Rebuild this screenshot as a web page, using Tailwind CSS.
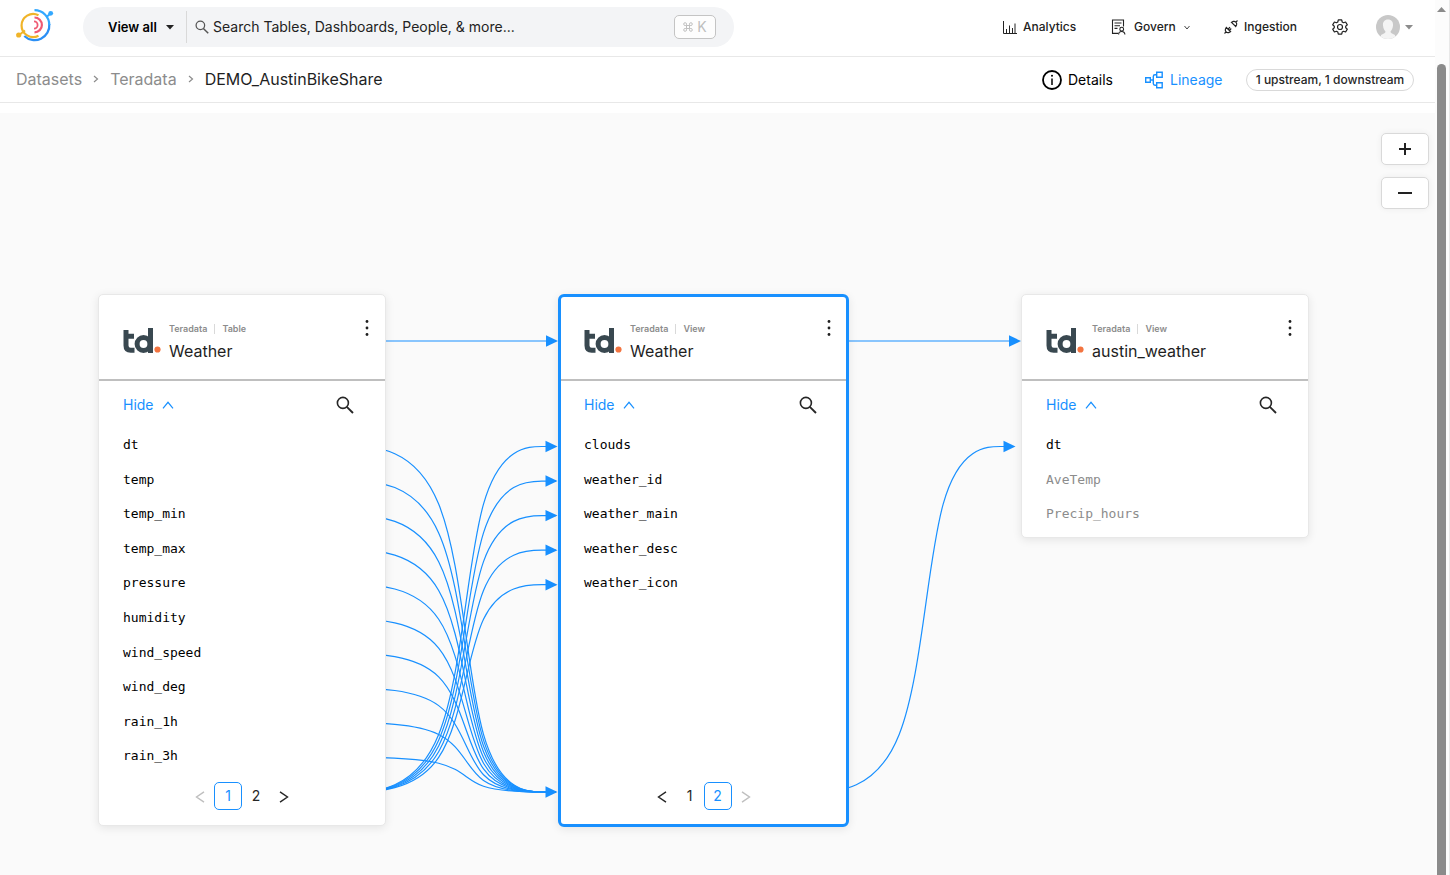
<!DOCTYPE html>
<html lang="en">
<head>
<meta charset="utf-8">
<meta name="viewport" content="width=device-width, initial-scale=1">
<title>DEMO_AustinBikeShare lineage</title>
<script src="https://cdn.jsdelivr.net/npm/@tailwindcss/browser@4"></script>
</head>
<body class="flex min-h-screen bg-white font-['Inter','Open_Sans',sans-serif] text-sm text-[#262626]">

<!-- Shared icons -->
<svg class="hidden" aria-hidden="true">
  <symbol id="td" viewBox="0 0 38 26">
    <g fill="none" stroke="#394850" stroke-width="5">
      <path d="M3 2V17.500Q3 22.200 7.700 22.200H11.500M3 8.200H11"/>
      <circle cx="20.500" cy="16" r="6.400"/>
      <path d="M27.500 0V25"/>
    </g>
    <circle cx="34.500" cy="21.500" r="3.100" fill="#f37440"/>
  </symbol>
  <symbol id="dots" viewBox="0 0 4 18"><g fill="#1f1f1f"><circle cx="2" cy="2.500" r="1.400"/><circle cx="2" cy="9" r="1.400"/><circle cx="2" cy="15.500" r="1.400"/></g></symbol>
  <symbol id="find" viewBox="0 0 18 18"><g fill="none" stroke="currentColor" stroke-width="1.600"><circle cx="6.900" cy="6.900" r="5.500"/><path d="M10.800 10.800L17 17" stroke-width="1.900"/></g></symbol>
  <symbol id="up" viewBox="0 0 12 8"><path d="M1 7.300L6 1.300L11 7.300" fill="none" stroke="currentColor" stroke-width="1.200"/></symbol>
  <symbol id="prev" viewBox="0 0 10 12"><path d="M9 .8L1.500 6L9 11.200" fill="none" stroke="currentColor" stroke-width="1.400"/></symbol>
  <symbol id="next" viewBox="0 0 10 12"><path d="M1 .8L8.500 6L1 11.200" fill="none" stroke="currentColor" stroke-width="1.400"/></symbol>
</svg>

<div class="flex min-w-0 flex-1 flex-col">
  <header class="flex h-[57px] shrink-0 items-start border-b border-[#e8e8e8] pl-4 pr-[22px]">
    <a href="#" aria-label="Home" class="mt-2 block w-[67px] shrink-0">
      <svg width="38" height="34" viewBox="0 0 38 34" fill="none" stroke-width="2">
        <path d="M8.300 28A14.800 14.800 0 0 0 33.300 16" stroke="#2b8ff5" stroke-width="2.200"/>
        <path d="M18.500 2.200A14.800 14.800 0 0 1 33.300 17" stroke="#33a8ff" stroke-width="2.200"/>
        <path d="M30.500 9L34.500 5.500" stroke="#33a8ff"/><circle cx="34.700" cy="5.300" r="2.400" fill="#33a8ff"/>
        <path d="M22.500 7.200A11.600 11.600 0 1 0 22.500 27.800" stroke="#f0b429" stroke-width="2.200"/>
        <path d="M3 27L9 22.500" stroke="#f0b429"/><circle cx="2.700" cy="27" r="2.600" fill="#f0b429"/>
        <path d="M18.500 9.500A7.400 7.400 0 0 1 18.500 24.300" stroke="#ef5a73" stroke-width="2.200"/>
        <path d="M18 13.400A3.600 3.600 0 0 1 18 20.600" stroke="#ef5a73" stroke-width="1.800"/>
      </svg>
    </a>
    <form class="mt-[7px] flex h-10 min-w-0 max-w-[651px] flex-1 items-center rounded-full bg-[#f3f4f6] pl-[25px] pr-[18px]">
      <label class="relative flex h-8 w-[79px] shrink-0 items-center border-r border-[#d9d9d9]">
        <select aria-label="Search in" class="w-full appearance-none bg-transparent text-[13px] font-semibold text-black"><option>View all</option></select>
        <svg class="pointer-events-none absolute right-3 top-[14px]" width="8" height="5" viewBox="0 0 8 5"><path d="M0 0H8L4 4.500Z" fill="#222"/></svg>
      </label>
      <label for="q" class="ml-2 shrink-0"><svg class="text-[#555]" width="14" height="14"><use href="#find"/></svg></label>
      <input id="q" type="search" placeholder="Search Tables, Dashboards, People, &amp; more..." class="ml-1 min-w-0 flex-1 bg-transparent text-sm outline-none placeholder:text-[#222]">
      <kbd class="flex h-6 w-[42px] items-center justify-center gap-1 rounded-[5px] border border-[#c4c4c4] bg-[#fdfdfd] font-[inherit] text-sm text-[#bfbfbf]">
        <svg width="10" height="10" viewBox="0 0 10 10" fill="none" stroke="currentColor"><path d="M3.500 3.500H6.500V6.500H3.500ZM3.500 3.500V2.200A1.400 1.400 0 1 0 2.200 3.500H3.500M6.500 3.500V2.200A1.400 1.400 0 1 1 7.800 3.500H6.500M3.500 6.500V7.800A1.400 1.400 0 1 1 2.200 6.500H3.500M6.500 6.500V7.800A1.400 1.400 0 1 0 7.800 6.500H6.500"/></svg>K
      </kbd>
    </form>
    <nav class="ml-auto mt-[7px] flex h-10 shrink-0 items-center text-xs font-medium text-[#222]">
      <a href="#" class="flex w-[108px] items-center gap-[6px]">
        <svg width="14" height="14" viewBox="0 0 14 14" fill="none" stroke="#222"><path d="M.5 1V13.500H14M3.500 13V9M6.500 13V5.500M9.500 13V8M12 13V3.500"/></svg>Analytics
      </a>
      <button class="flex w-[113px] items-center gap-2">
        <svg width="15" height="16" viewBox="0 0 15 16" fill="none" stroke="#222" stroke-width="1.100"><path d="M7 14.400H1.500V1H12.500V7.500M3.500 4H10.500M3.500 6.700H9M3.500 9.400H6.500"/><circle cx="10.700" cy="10.200" r="1.900"/><path d="M7.600 15.500C7.600 11.500 13.900 11.500 13.900 15.500"/></svg>Govern
        <svg width="6" height="5" viewBox="0 0 6 5" fill="none" stroke="#444"><path d="M.5 1L3 4L5.500 1"/></svg>
      </button>
      <a href="#" class="flex w-[108px] items-center gap-[6px]">
        <svg width="14" height="14" viewBox="0 0 14 14" fill="none" stroke="#222" stroke-width="1.200"><path d="M.5 13.500L2.300 11.700M11.700 2.300L13.500 .5M2.300 7.500L6.500 11.700L4.700 12.600Q3.200 13 2.100 11.900T1.400 9.300ZM7.500 2.300L11.700 6.500L12.600 4.700Q13 3.200 11.900 2.100T9.300 1.400ZM4.300 9L6 7.200M5.500 10.300L7.200 8.500"/></svg>Ingestion
      </a>
      <button aria-label="Settings" class="w-[44px]">
        <svg width="16" height="16" viewBox="0 0 16 16" fill="none" stroke="#222" stroke-width="1.200" stroke-linejoin="round"><path d="M6.300 .8H9.700L10.200 3L11.500 3.700L13.600 3L15.300 5.900L13.700 7.300V8.700L15.300 10.100L13.600 13L11.500 12.300L10.200 13L9.700 15.200H6.300L5.800 13L4.500 12.300L2.400 13L.7 10.100L2.300 8.700V7.300L.7 5.900L2.400 3L4.500 3.700L5.800 3Z"/><circle cx="8" cy="8" r="2.500"/></svg>
      </button>
      <button aria-label="Account" class="flex items-center gap-[5px]">
        <svg width="24" height="24" viewBox="0 0 24 24"><defs><clipPath id="face"><circle cx="12" cy="12" r="12"/></clipPath></defs><g clip-path="url(#face)"><rect width="24" height="24" fill="#c8c8c8"/><path d="M12 4.500C8.500 4.500 6.700 7 7 10.500C7.200 13.500 8.500 15.500 9.500 16.500C9.500 18 8 18.500 5 20V24H19V20C16 18.500 14.500 18 14.500 16.500C15.500 15.500 16.800 13.500 17 10.500C17.300 7 15.500 4.500 12 4.500Z" fill="#f4f4f4"/></g></svg>
        <svg width="8" height="5" viewBox="0 0 8 5"><path d="M0 0H8L4 4.500Z" fill="#8c8c8c"/></svg>
      </button>
    </nav>
  </header>

  <div class="flex h-[46px] shrink-0 items-center border-b border-[#e8e8e8] pl-4 pr-[21px]">
    <nav aria-label="Breadcrumb" class="flex items-center gap-[11px] pb-[2px] text-base text-[#8c8c8c]">
      <a href="#">Datasets</a>
      <svg width="6" height="8" viewBox="0 0 6 8" fill="none" stroke="#8c8c8c" stroke-width="1.200"><path d="M1 1L4.500 4L1 7"/></svg>
      <a href="#">Teradata</a>
      <svg width="6" height="8" viewBox="0 0 6 8" fill="none" stroke="#8c8c8c" stroke-width="1.200"><path d="M1 1L4.500 4L1 7"/></svg>
      <a href="#" class="text-[#1f1f1f]">DEMO_AustinBikeShare</a>
    </nav>
    <div class="ml-auto flex shrink-0 items-center">
      <button class="flex w-[103px] items-center gap-[6px] text-black">
        <svg width="20" height="20" viewBox="0 0 20 20" fill="none" stroke="#000"><circle cx="10" cy="10" r="9" stroke-width="1.800"/><path d="M10 8.500V15" stroke-width="1.500"/><circle cx="10" cy="5.800" r="1" fill="#000" stroke="none"/></svg>Details
      </button>
      <button class="flex w-[101px] items-center gap-[7px] text-[#1890ff]">
        <svg width="18" height="18" viewBox="0 0 18 18" fill="none" stroke="currentColor" stroke-width="1.400"><path d="M.7 6.700H5.300V11.300H.7ZM11.700 1.200H17.200V6.200H11.700ZM11.700 11.800H17.200V16.800H11.700ZM5.300 9H8.300M11.700 3.700H10Q8.300 3.700 8.300 5.400V12.600Q8.300 14.300 10 14.300H11.700"/></svg>Lineage
      </button>
      <span class="flex h-[22px] w-[168px] items-center justify-center whitespace-nowrap rounded-full border border-[#d9d9d9] text-xs font-medium">1 upstream, 1 downstream</span>
    </div>
  </div>

  <main class="relative mt-[10px] min-h-[762px] flex-1 overflow-hidden bg-[#fafafa]">
    <svg id="edges" class="absolute left-0 top-0 h-full w-full" fill="none" stroke="#1890ff" stroke-width="1.200" aria-hidden="true"></svg>

    <!-- Upstream table -->
    <article class="absolute left-[98px] top-[181px] w-[288px] rounded-[5px] border border-[#e8e8e8] bg-white pb-[15px] shadow-[0_2px_10px_rgba(0,0,0,0.09)]">
      <header class="flex h-[86px] items-start border-b-2 border-[#bfbfbf] pl-6 pr-4 pt-6">
        <svg class="mt-[9px] shrink-0" width="38" height="26"><use href="#td"/></svg>
        <div class="ml-2 mt-[2px] flex-1">
          <p class="flex h-4 items-center text-[9px] font-semibold text-[#8c8c8c]"><span>Teradata</span><span class="mx-[7px] h-[10px] w-px bg-[#d9d9d9]"></span><span>Table</span></p>
          <h2 class="mt-1 text-base leading-5 text-[#1f1f1f]">Weather</h2>
        </div>
        <button aria-label="More"><svg width="4" height="18"><use href="#dots"/></svg></button>
      </header>
      <div class="flex h-[47px] items-center justify-between pl-6 pr-[31px] pt-px">
        <button class="flex items-center gap-2 text-[#1890ff]">Hide <svg width="12" height="8"><use href="#up"/></svg></button>
        <button aria-label="Search columns"><svg width="18" height="18"><use href="#find"/></svg></button>
      </div>
      <ul class="grid h-[346px] grid-rows-10 items-center pl-6 font-['DejaVu_Sans_Mono',monospace] text-[13px] text-black">
        <li>dt</li><li>temp</li><li>temp_min</li><li>temp_max</li><li>pressure</li><li>humidity</li><li>wind_speed</li><li>wind_deg</li><li>rain_1h</li><li>rain_3h</li>
      </ul>
      <nav aria-label="Pages" class="mt-2 flex h-7 justify-center">
        <button disabled aria-label="Previous" class="flex w-7 items-center justify-center text-[#bfbfbf]"><svg class="mt-[2px]" width="10" height="12"><use href="#prev"/></svg></button>
        <button class="w-7 rounded-[5px] border border-[#1890ff] text-[#1890ff]">1</button>
        <button class="w-7">2</button>
        <button aria-label="Next" class="flex w-7 items-center justify-center"><svg class="mt-[2px]" width="10" height="12"><use href="#next"/></svg></button>
      </nav>
    </article>

    <!-- Selected view -->
    <article class="absolute left-[558px] top-[181px] w-[291px] rounded-[6px] border-[3px] border-[#1890ff] bg-white pb-[14px] shadow-[0_2px_10px_rgba(0,0,0,0.09)]">
      <header class="flex h-[84px] items-start border-b-2 border-[#bfbfbf] pl-[23px] pr-[15px] pt-[22px]">
        <svg class="mt-[9px] shrink-0" width="38" height="26"><use href="#td"/></svg>
        <div class="ml-2 mt-[2px] flex-1">
          <p class="flex h-4 items-center text-[9px] font-semibold text-[#8c8c8c]"><span>Teradata</span><span class="mx-[7px] h-[10px] w-px bg-[#d9d9d9]"></span><span>View</span></p>
          <h2 class="mt-1 text-base leading-5 text-[#1f1f1f]">Weather</h2>
        </div>
        <button aria-label="More"><svg width="4" height="18"><use href="#dots"/></svg></button>
      </header>
      <div class="flex h-[47px] items-center justify-between pl-[23px] pr-[29px] pt-px">
        <button class="flex items-center gap-2 text-[#1890ff]">Hide <svg width="12" height="8"><use href="#up"/></svg></button>
        <button aria-label="Search columns"><svg width="18" height="18"><use href="#find"/></svg></button>
      </div>
      <ul class="grid h-[346px] grid-rows-10 items-center pl-[23px] font-['DejaVu_Sans_Mono',monospace] text-[13px] text-black">
        <li>clouds</li><li>weather_id</li><li>weather_main</li><li>weather_desc</li><li>weather_icon</li>
      </ul>
      <nav aria-label="Pages" class="mt-2 flex h-7 justify-center">
        <button aria-label="Previous" class="flex w-7 items-center justify-center"><svg class="mt-[2px]" width="10" height="12"><use href="#prev"/></svg></button>
        <button class="w-7">1</button>
        <button class="w-7 rounded-[5px] border border-[#1890ff] text-[#1890ff]">2</button>
        <button disabled aria-label="Next" class="flex w-7 items-center justify-center text-[#bfbfbf]"><svg class="mt-[2px]" width="10" height="12"><use href="#next"/></svg></button>
      </nav>
    </article>

    <!-- Downstream view -->
    <article class="absolute left-[1021px] top-[181px] w-[288px] rounded-[5px] border border-[#e8e8e8] bg-white pb-[5px] shadow-[0_2px_10px_rgba(0,0,0,0.09)]">
      <header class="flex h-[86px] items-start border-b-2 border-[#bfbfbf] pl-6 pr-4 pt-6">
        <svg class="mt-[9px] shrink-0" width="38" height="26"><use href="#td"/></svg>
        <div class="ml-2 mt-[2px] flex-1">
          <p class="flex h-4 items-center text-[9px] font-semibold text-[#8c8c8c]"><span>Teradata</span><span class="mx-[7px] h-[10px] w-px bg-[#d9d9d9]"></span><span>View</span></p>
          <h2 class="mt-1 text-base leading-5 text-[#1f1f1f]">austin_weather</h2>
        </div>
        <button aria-label="More"><svg width="4" height="18"><use href="#dots"/></svg></button>
      </header>
      <div class="flex h-[47px] items-center justify-between pl-6 pr-[31px] pt-px">
        <button class="flex items-center gap-2 text-[#1890ff]">Hide <svg width="12" height="8"><use href="#up"/></svg></button>
        <button aria-label="Search columns"><svg width="18" height="18"><use href="#find"/></svg></button>
      </div>
      <ul class="grid h-[104px] grid-rows-3 items-center pl-6 font-['DejaVu_Sans_Mono',monospace] text-[13px] text-black">
        <li>dt</li><li class="text-[#8c8c8c]">AveTemp</li><li class="text-[#8c8c8c]">Precip_hours</li>
      </ul>
    </article>

    <!-- Zoom controls float over the canvas -->
    <div class="absolute right-[6px] top-5 flex flex-col gap-3">
      <button aria-label="Zoom in" class="flex h-8 w-12 items-center justify-center rounded-[5px] border border-[#d9d9d9] bg-white shadow-[0_0_6px_rgba(0,0,0,0.06)]"><svg width="14" height="14" viewBox="0 0 14 14" stroke="#222" stroke-width="2"><path d="M1 7H13M7 1V13"/></svg></button>
      <button aria-label="Zoom out" class="flex h-8 w-12 items-center justify-center rounded-[5px] border border-[#d9d9d9] bg-white shadow-[0_0_6px_rgba(0,0,0,0.06)]"><svg width="14" height="14" viewBox="0 0 14 14" stroke="#222" stroke-width="2"><path d="M0 7H14"/></svg></button>
    </div>
  </main>
</div>

<!-- Scroll track -->
<div class="flex w-[15px] shrink-0 flex-col items-center border-r border-[#e8e8e8] bg-[#fcfcfc] pr-[2px] pt-[7px]" aria-hidden="true">
  <svg width="9" height="5" viewBox="0 0 9 5"><path d="M0 5L4.500 0L9 5Z" fill="#8b8b8b"/></svg>
  <div class="mt-[52px] w-[9px] flex-1 rounded-t-full bg-[#8b8b8b]"></div>
</div>

<script>
  // Cubic B-spline through four control points, as bezier segments.
  function edge(xs, y1, y2) {
    const p = [[xs[0], y1], [xs[1], y1], [xs[2], y2], [xs[3], y2]];
    const mix = (...w) => [0, 1].map(k => w.reduce((s, v, i) => s + v * p[i][k], 0).toFixed(2)).join(' ');
    const t = 1 / 3, s = 1 / 6;
    return `M${mix(1)}L${mix(5 * s, s)}` +
      `C${mix(2 * t, t)} ${mix(t, 2 * t)} ${mix(s, 4 * s, s)}` +
      `C${mix(0, 2 * t, t)} ${mix(0, t, 2 * t)} ${mix(0, s, 4 * s, s)}` +
      `C${mix(0, 0, 2 * t, t)} ${mix(0, 0, t, 2 * t)} ${mix(0, 0, s, 5 * s)}L${mix(0, 0, 0, 1)}`;
  }
  const row = i => 333.5 + 34.55 * i;
  const left = [332, 457, 472, 556], right = [795, 917, 932, 1014];
  let out = '';
  const line = d => { out += `<path d="${d}"/>`; };
  const head = (x, y) => { out += `<path d="M${x} ${y}l-12 -5.7v11.400Z" fill="#1890ff" stroke="none"/>`; };
  for (let i = 0; i < 10; i++) line(edge(left, row(i), row(10)));
  for (let i = 0; i < 5; i++) {
    line(edge(left, row(10), row(i)));
    head(557.5, row(i));
  }
  head(557.5, row(10));
  line(edge(right, row(10), row(0)));
  line('M380 228H550M840 228H1012');
  head(1015.5, row(0));
  head(558, 228);
  head(1021, 228);
  document.getElementById('edges').innerHTML = out;
</script>
</body>
</html>
